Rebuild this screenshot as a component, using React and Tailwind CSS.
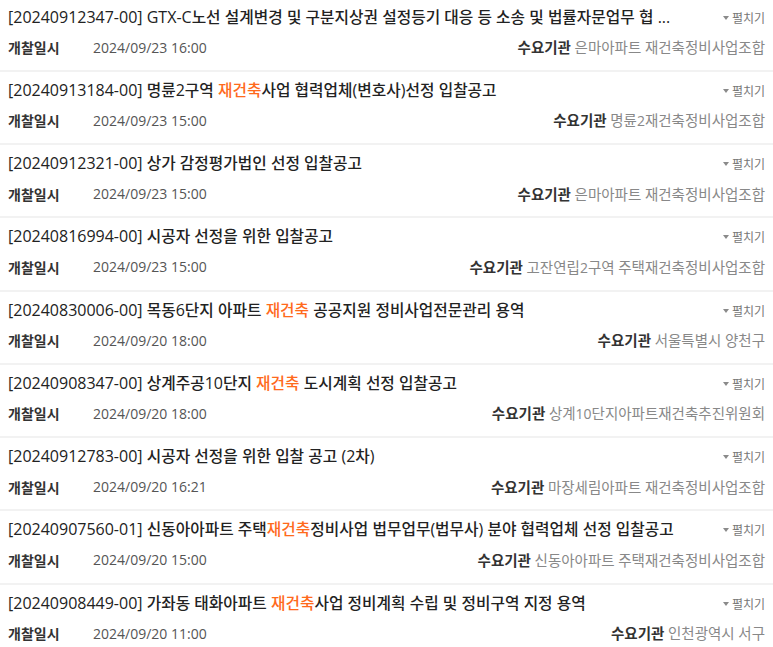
import React from "react";

const rows = [
  { id: "20240912347-00", title: [["GTX-C노선 설계변경 및 구분지상권 설정등기 대응 등 소송 및 법률자문업무 협 ...", false]], date: "2024/09/23 16:00", org: "은마아파트 재건축정비사업조합" },
  { id: "20240913184-00", title: [["명륜2구역 ", false], ["재건축", true], ["사업 협력업체(변호사)선정 입찰공고", false]], date: "2024/09/23 15:00", org: "명륜2재건축정비사업조합" },
  { id: "20240912321-00", title: [["상가 감정평가법인 선정 입찰공고", false]], date: "2024/09/23 15:00", org: "은마아파트 재건축정비사업조합" },
  { id: "20240816994-00", title: [["시공자 선정을 위한 입찰공고", false]], date: "2024/09/23 15:00", org: "고잔연립2구역 주택재건축정비사업조합" },
  { id: "20240830006-00", title: [["목동6단지 아파트 ", false], ["재건축", true], [" 공공지원 정비사업전문관리 용역", false]], date: "2024/09/20 18:00", org: "서울특별시 양천구" },
  { id: "20240908347-00", title: [["상계주공10단지 ", false], ["재건축", true], [" 도시계획 선정 입찰공고", false]], date: "2024/09/20 18:00", org: "상계10단지아파트재건축추진위원회" },
  { id: "20240912783-00", title: [["시공자 선정을 위한 입찰 공고 (2차)", false]], date: "2024/09/20 16:21", org: "마장세림아파트 재건축정비사업조합" },
  { id: "20240907560-01", title: [["신동아아파트 주택", false], ["재건축", true], ["정비사업 법무업무(법무사) 분야 협력업체 선정 입찰공고", false]], date: "2024/09/20 15:00", org: "신동아아파트 주택재건축정비사업조합" },
  { id: "20240908449-00", title: [["가좌동 태화아파트 ", false], ["재건축", true], ["사업 정비계획 수립 및 정비구역 지정 용역", false]], date: "2024/09/20 11:00", org: "인천광역시 서구" },
];

const LATIN = { fontFamily: '"Open Sans", "Noto Sans CJK KR", sans-serif' };

function K({ text, cls }) {
  const parts = text.split(/([\uAC00-\uD7A3]+)/);
  return (
    <>
      {parts.map((p, i) =>
        /[\uAC00-\uD7A3]/.test(p) ? (
          <span key={i} className={cls} style={{ fontFamily: '"Noto Sans CJK KR", sans-serif' }}>
            {p}
          </span>
        ) : (
          <React.Fragment key={i}>{p}</React.Fragment>
        )
      )}
    </>
  );
}

function Row({ r }) {
  return (
    <div className="pt-[7px] pb-[12.25px] pl-2 pr-2 border-b-2 border-[#f2f2f2]">
      <div className="flex h-[22px] items-center justify-between">
        <div className="min-w-0 flex-1 overflow-hidden whitespace-nowrap text-[16px] leading-[22px] text-[#222]" style={LATIN}>
          [{r.id}]{" "}
          {r.title.map(([t, hl], i) => (
            <span key={i} className={hl ? "text-[#ff6a1c]" : ""}>
              <K text={t} cls="text-[15.75px] font-medium" />
            </span>
          ))}
        </div>
        <div className="flex shrink-0 items-center gap-[2px] pt-[2px] text-[12px] text-[#777]" style={LATIN}>
          <svg width="6" height="4" viewBox="0 0 6 4" className="mr-[1px]">
            <polygon points="0,0 6,0 3,4" fill="#8a8a8a" />
          </svg>
          <K text="펼치기" cls="text-[12px]" />
        </div>
      </div>
      <div className="mt-[10px] flex h-[20px] items-center justify-between text-[14px] leading-[20px]" style={LATIN}>
        <div className="flex items-center">
          <span className="w-[85px] text-[#333]">
            <K text="개찰일시" cls="text-[14px] font-bold" />
          </span>
          <span className="text-[#555]">{r.date}</span>
        </div>
        <div className="whitespace-nowrap">
          <span className="text-[#333]">
            <K text="수요기관" cls="text-[14.5px] font-bold" />
          </span>{" "}
          <span className="text-[#888]">
            <K text={r.org} cls="text-[14.5px]" />
          </span>
        </div>
      </div>
    </div>
  );
}

export default function App() {
  return (
    <div className="h-[647px] w-full overflow-hidden bg-white">
      <div className="-mt-[1.5px]">
        {rows.map((r) => (
          <Row key={r.id} r={r} />
        ))}
      </div>
    </div>
  );
}
